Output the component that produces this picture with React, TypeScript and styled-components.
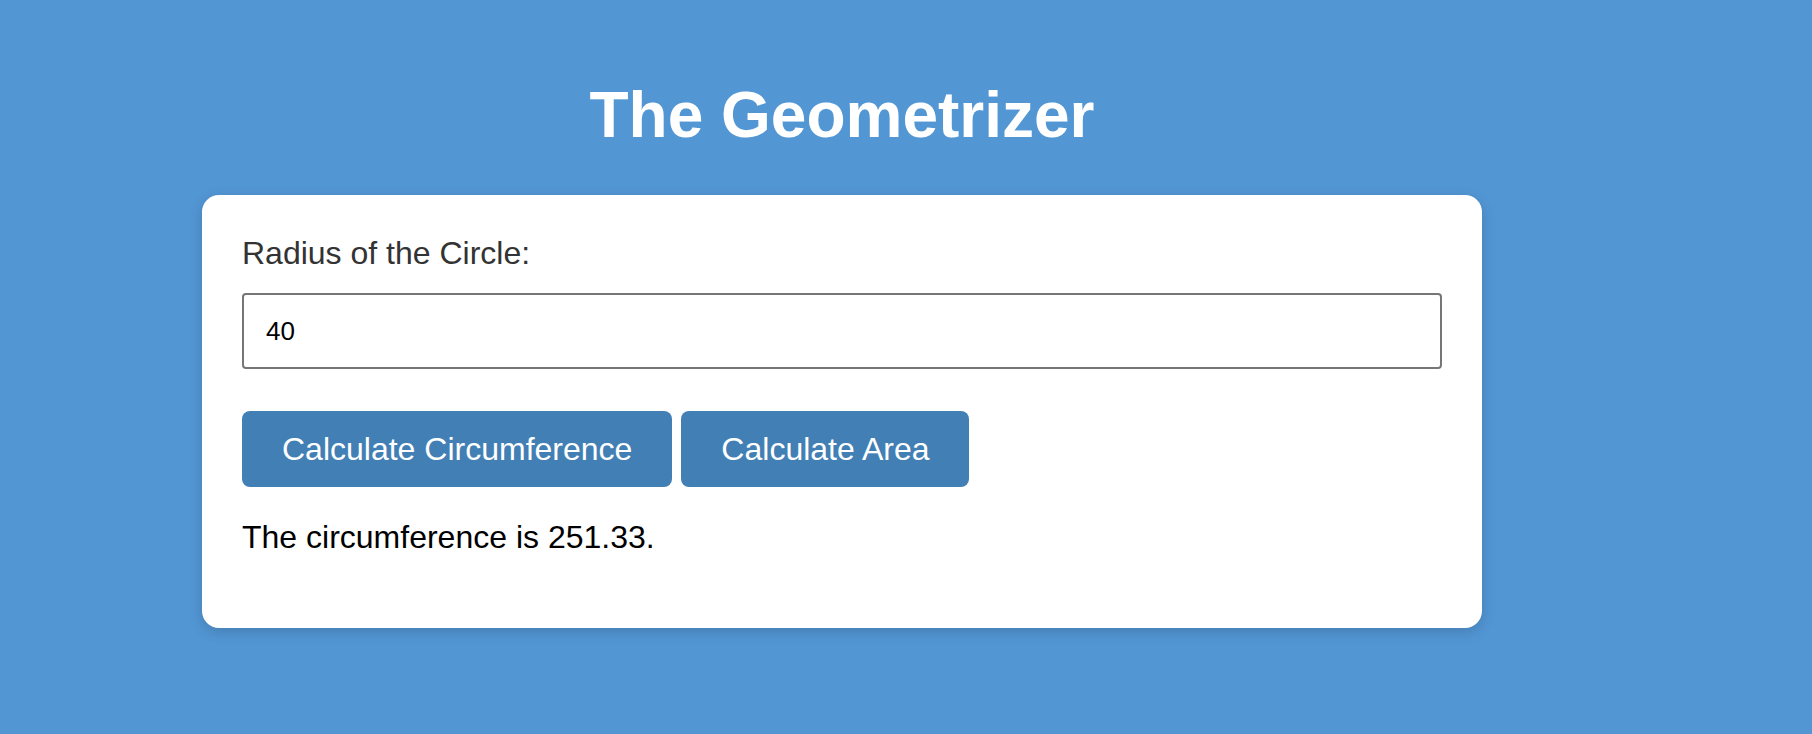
import React, { useState } from "react";
import styled, { createGlobalStyle } from "styled-components";

const GlobalStyle = createGlobalStyle`
  html, body {
    margin: 0;
    padding: 0;
    background: #5296d4;
  }
  body {
    font-family: "Liberation Sans", Arial, Helvetica, sans-serif;
    min-height: 734px;
  }
`;

const Page = styled.div`
  padding: 79px 0 0 202px;
`;

const Container = styled.div`
  width: 1280px;
  display: flex;
  flex-direction: column;
`;

const Title = styled.h1`
  margin: 0 0 44px;
  text-align: center;
  color: #ffffff;
  font-size: 64px;
  font-weight: 700;
  line-height: 72px;
`;

const Card = styled.div`
  background: #ffffff;
  border-radius: 17px;
  box-shadow: 0 4px 14px rgba(0, 0, 0, 0.16);
  padding: 40px 40px 73px;
  display: flex;
  flex-direction: column;
`;

const Label = styled.label`
  color: #333333;
  font-size: 32px;
  line-height: 36px;
  margin-bottom: 22px;
`;

const Input = styled.input`
  box-sizing: border-box;
  width: 100%;
  height: 76px;
  padding: 0 22px;
  border: 2px solid #767676;
  border-radius: 4px;
  font-family: "Liberation Sans", Arial, sans-serif;
  font-size: 26px;
  color: #000000;
  outline: none;
  margin-bottom: 42px;
`;

const ButtonRow = styled.div`
  display: flex;
  gap: 9px;
  margin-bottom: 32px;
`;

const Button = styled.button`
  height: 76px;
  padding: 0 40px;
  border: none;
  border-radius: 8px;
  background: #427fb5;
  color: #ffffff;
  font-family: "Liberation Sans", Arial, sans-serif;
  font-size: 32px;
  cursor: pointer;
`;

const Result = styled.p`
  margin: 0;
  color: #000000;
  font-size: 32px;
  line-height: 36px;
`;

export default function App() {
  const [radius, setRadius] = useState("40");
  const [result, setResult] = useState("The circumference is 251.33.");

  const r = parseFloat(radius) || 0;

  return (
    <>
      <GlobalStyle />
      <Page>
        <Container>
          <Title>The Geometrizer</Title>
          <Card>
            <Label htmlFor="radius">Radius of the Circle:</Label>
            <Input
              id="radius"
              type="text"
              value={radius}
              onChange={(e) => setRadius(e.target.value)}
            />
            <ButtonRow>
              <Button
                onClick={() =>
                  setResult(`The circumference is ${(2 * Math.PI * r).toFixed(2)}.`)
                }
              >
                Calculate Circumference
              </Button>
              <Button
                onClick={() =>
                  setResult(`The area is ${(Math.PI * r * r).toFixed(2)}.`)
                }
              >
                Calculate Area
              </Button>
            </ButtonRow>
            <Result>{result}</Result>
          </Card>
        </Container>
      </Page>
    </>
  );
}
